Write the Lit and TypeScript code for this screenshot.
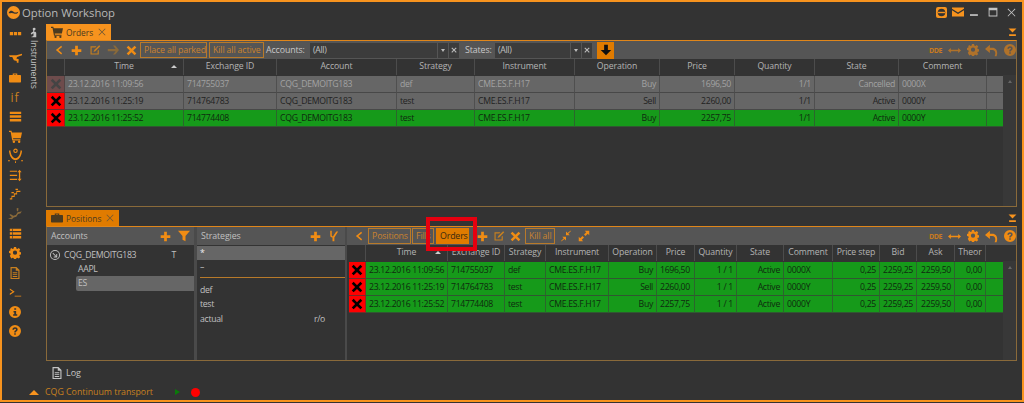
import { LitElement, html, css, svg } from 'lit';
import { customElement } from 'lit/decorators.js';

const ic = (w: number, h: number, body: unknown, cls = '') =>
  html`<svg class="ic ${cls}" width=${w} height=${h} viewBox="0 0 16 16" fill="currentColor">${body}</svg>`;

const plus = (s = 11) => ic(s, s, svg`<path d="M6 1h4v5h5v4h-5v5H6v-5H1V6h5z"/>`);
const cross = (s = 11) => ic(s, s, svg`<path d="M3.500 1 8 5.500 12.500 1 15 3.500 10.500 8 15 12.500 12.500 15 8 10.500 3.500 15 1 12.500 5.500 8 1 3.500z"/>`);
const thinX = (s = 8) => ic(s, s, svg`<path d="M2 1 8 7l6-6 1 1-6 6 6 6-1 1-6-6-6 6-1-1 6-6-6-6z"/>`);
const edit = (s = 12) => ic(s, s, svg`<path d="M2 3h8L8.500 4.500H3.500v8h8V9L13 7.500V14H2z"/><path d="M13.500 1.500 15 3 8.500 9.500 6 10.500 7 8z"/>`);
const chevron = (s = 11) => ic(s, s, svg`<path d="M11.500 1 13 3 7 8l6 5-1.500 2L3 8z"/>`);
const arrowRight = (s = 12) => ic(s, s, svg`<path d="M8 2h3l5 6-5 6H8l3.500-4.500H1v-3h10.500z"/>`);
const help = (s = 12) => ic(s, s, svg`<path fill-rule="evenodd" d="M8 0a8 8 0 1 0 0 16A8 8 0 0 0 8 0zM8 3c2.200 0 3.500 1.200 3.500 3 0 1.500-.9 2.200-1.700 2.800-.5.3-.8.600-.8 1.200H7c0-1.300.6-2 1.400-2.600.6-.4 1-.8 1-1.300 0-.6-.5-1-1.300-1-.9 0-1.400.5-1.500 1.300H4.500C4.600 4.300 6 3 8 3zM7 11h2v2H7z"/>`);
const info = (s = 12) => ic(s, s, svg`<path fill-rule="evenodd" d="M8 0a8 8 0 1 0 0 16A8 8 0 0 0 8 0zM7 3h2.500v2H7zM6 6.500h3.500V11H11v2H5.500v-2H7V8.500H6z"/>`);
const gear = (s = 12) => ic(s, s, svg`<path fill-rule="evenodd" d="M6.500 0h3l.4 2.200 1.500.6L13.300 1.500l2.100 2.100-1.300 1.900.6 1.500 2.300.5v3l-2.300.4-.6 1.500 1.300 1.900-2.100 2.100-1.900-1.300-1.500.6-.4 2.200h-3l-.4-2.200-1.500-.6-1.900 1.300L.6 12.400l1.300-1.900-.6-1.500L-1 8.600v-3l2.300-.5.6-1.500L.6 3.600 2.700 1.500l1.900 1.300 1.500-.6zM8 5a3 3 0 1 0 0 6 3 3 0 0 0 0-6z" transform="translate(.5 0) scale(.94)"/>`);
const undo = (s = 13) => ic(s, s, svg`<path d="M6 1v3.500h3c4 0 6 2.800 6 6.500 0 1.300-.3 2.800-.8 4h-2.400c.6-1.200.9-2.500.9-3.600 0-2.200-1.200-3.900-3.700-3.900H6V11L0 6z"/>`);
const resize = (s = 13) => ic(s, s, svg`<path d="M0 8l3.500-3v2h9V5L16 8l-3.500 3V9h-9v2z"/>`);
const collapseIc = (s = 13) => ic(s, s, svg`<path d="M15 1 11 5l2 2H8V2l2 2 4-3zM1 15l4-4-2-2h5v5l-2-2-4 3z"/>`);
const expandIc = (s = 13) => ic(s, s, svg`<path d="M9 1h6v6l-2-2-3 3-2-2 3-3zM7 15H1V9l2 2 3-3 2 2-3 3z"/>`);
const cart = (s = 14) => ic(s, s, svg`<path d="M0 1h3l.7 2H16l-1.500 7H5l.3 1.500H14V13H4L2 2.500H0z" /><circle cx="6" cy="14.500" r="1.500"/><circle cx="12.500" cy="14.500" r="1.500"/>`);
const briefcase = (s = 14) => ic(s, s, svg`<path d="M5 2h6v2h4a1 1 0 0 1 1 1v8a1 1 0 0 1-1 1H1a1 1 0 0 1-1-1V5a1 1 0 0 1 1-1h4zm1.500 1.200V4h3v-.8z"/>`);
const funnel = (s = 12) => ic(s, s, svg`<path d="M0 1h16L10 8v7l-4-2V8z"/>`);
const fork = (s = 12) => ic(s, s, svg`<path d="M3 1h2v6c0 1 .6 1.500 1.500 1.500L11 2h2.500L8.500 10v5H6v-5C4 10 3 9 3 7z"/>`);
const bars = (s = 14) => ic(s, s, svg`<path d="M1 2h14v3H1zM1 6.500h14v3H1zM1 11h14v3H1z"/>`);
const docIc = (s = 13) => ic(s, s, svg`<path fill-rule="evenodd" d="M2 0h8l4 4v12H2zm1.500 1.500v13h9V5H9V1.500zM5 7h6v1.200H5zm0 2.500h6v1.200H5zm0 2.500h6v1.200H5z"/>`);
const menuIc = () => ic(9, 9, svg`<path d="M1 1h14L8 8zM2 11h12v3H2z"/>`);

const sideIcons = [
  ic(13, 13, svg`<path d="M1 6h4v4H1zM6 6h4v4H6zM11 6h4v4h-4z"/>`),
  ic(13, 13, svg`<path d="M0 4h9l7-2v2l-6 2-1 2 3 1-.5 4.500-2-.5V11L6 10 4 6H1z"/>`),
  briefcase(12),
  html`<span class="if">if</span>`,
  bars(13),
  cart(13),
  ic(15, 15, svg`<path d="M1 3l1.500-.5C3 7 5 11 8 11s5-4 5.500-8.500L15 3c-.5 6-3.500 10-7 10S1.500 9 1 3z"/><circle cx="8" cy="3" r="1.800" fill="none" stroke="currentColor" stroke-width="1.200"/><path d="M0 13h2v1H0zM14 13h2v1h-2zM7.500 14h1v2h-1z"/>`),
  ic(13, 13, svg`<path d="M1 2h9v1.500H1zM1 7h9v1.500H1zM1 12h9v1.500H1zM13 1l2.500 3h-1.700v8h1.700L13 15l-2.500-3h1.700V4h-1.700z"/>`),
  ic(13, 13, svg`<path d="M1 14h3v-3h3V8h3V5h4V3.500h-5v3H6v3H3v3H1zM8 1h3v1.500H8zM3 5h3v1.500H3z"/>`),
  ic(14, 14, svg`<path d="M0 13l4-1 2-2 3-1 2-3 4-1 1-1-1.500 3-3 1-2 3-3 1-2 2zM2 8l3 1 1.500 2.500-1.500.5-3-2.500zM10 1l2 .5-.5 4-1.500-1.500z"/>`, 'dim'),
  ic(13, 13, svg`<path d="M1 2h14v3H1zM1 6.500h14v3H1zM1 11h14v3H1z"/><path fill="#333" d="M4 2h.8v12H4z"/>`),
  gear(12),
  ic(12, 12, svg`<path fill-rule="evenodd" d="M2 0h8l4 4v12H2zm1.500 1.500v13h9V5H9V1.500zM5 7h6v1.200H5zm0 2.500h6v1.200H5zm0 2.500h6v1.200H5z"/>`, 'soft'),
  ic(13, 13, svg`<path d="M1 3 7 7 1 11V9.300L4.500 7 1 4.700zM7 12h8v1H7z"/>`),
  info(12),
  help(12),
];

const ordersTop = [
  ['dim', '23.12.2016 11:09:56', '714755037', 'CQG_DEMOITG183', 'def', 'CME.ES.F.H17', 'Buy', '1696,50', '1/1', 'Cancelled', '0000X'],
  ['gray', '23.12.2016 11:25:19', '714764783', 'CQG_DEMOITG183', 'test', 'CME.ES.F.H17', 'Sell', '2260,00', '1/1', 'Active', '0000Y'],
  ['green', '23.12.2016 11:25:52', '714774408', 'CQG_DEMOITG183', 'test', 'CME.ES.F.H17', 'Buy', '2257,75', '1/1', 'Active', '0000Y'],
];
const topAlign = ['l', 'l', 'l', 'l', 'l', 'r', 'r', 'r', 'r', 'l'];
const topHead = ['Time', 'Exchange ID', 'Account', 'Strategy', 'Instrument', 'Operation', 'Price', 'Quantity', 'State', 'Comment'];

const ordersPos = [
  ['23.12.2016 11:09:56', '714755037', 'def', 'CME.ES.F.H17', 'Buy', '1696,50', '1 / 1', 'Active', '0000X', '0,25', '2259,25', '2259,50', '0,00'],
  ['23.12.2016 11:25:19', '714764783', 'test', 'CME.ES.F.H17', 'Sell', '2260,00', '1 / 1', 'Active', '0000Y', '0,25', '2259,25', '2259,50', '0,00'],
  ['23.12.2016 11:25:52', '714774408', 'test', 'CME.ES.F.H17', 'Buy', '2257,75', '1 / 1', 'Active', '0000Y', '0,25', '2259,25', '2259,50', '0,00'],
];
const posAlign = ['l', 'l', 'l', 'l', 'r', 'l', 'r', 'r', 'l', 'r', 'r', 'r', 'r'];
const posHead = ['Time', 'Exchange ID', 'Strategy', 'Instrument', 'Operation', 'Price', 'Quantity', 'State', 'Comment', 'Price step', 'Bid', 'Ask', 'Theor'];

@customElement('app-root')
export class AppRoot extends LitElement {
  static styles = css`
    :host {
      display: block;
      position: relative;
      width: 1024px;
      height: 403px;
      overflow: hidden;
      background: #333;
      color: #c4c4c4;
      font-family: 'Open Sans', 'Noto Sans', sans-serif;
      font-size: 8.700px;
      letter-spacing: -0.3px;
    }
    .window {
      box-sizing: border-box;
      height: 402px;
      border: 2px solid #f7931e;
      display: flex;
      flex-direction: column;
    }
    .ic { display: block; flex: none; }
    .titlebar {
      height: 22px;
      display: flex;
      align-items: center;
      padding: 0 5px 2px;
      box-sizing: border-box;
      flex: none;
    }
    .logo { color: #f7931e; margin-right: 2px; }
    .title { font-size: 11.300px; color: #b8b8b8; letter-spacing: 0; }
    .win-btns { margin-left: auto; display: flex; align-items: center; color: #c4c4c4; }
    .win-btns .o { color: #f7931e; }
    .win-btns > * { margin-left: 5px; }
    .body { flex: 1; display: flex; min-height: 0; }
    .sidebar {
      width: 26px;
      flex: none;
      display: flex;
      flex-direction: column;
      align-items: center;
      color: #f08c14;
    }
    .sidebar .slot { height: 19.500px; display: flex; align-items: center; justify-content: center; flex: none; }
    .sidebar .slot:first-child { margin-bottom: 5px; }
    .sidebar .dim { color: #8a6a3a; }
    .sidebar .soft { color: #c8801f; }
    .if { font-size: 12px; color: #c8801f; letter-spacing: 1px; }
    .strip {
      box-sizing: border-box;
      width: 18px;
      flex: none;
      display: flex;
      flex-direction: column;
      align-items: center;
      padding: 3px 7px 0 0;
      color: #c4c4c4;
    }
    .strip span { writing-mode: vertical-rl; margin-top: 2px; font-size: 8.600px; letter-spacing: 0; }
    .main { width: 971px; flex: none; display: flex; flex-direction: column; }
    .tabs { height: 16px; display: flex; align-items: stretch; flex: none; }
    .tabs.second { margin-top: 3px; }
    .tab {
      display: flex;
      align-items: center;
      gap: 3px;
      padding: 0 5px;
      background: #f7931e;
      color: #4a3a20;
      font-size: 8.400px;
      letter-spacing: 0;
    }
    .tab.dark { background: #e07b00; }
    .tab .x { color: #6b5636; margin-left: 2px; }
    .tab-menu { margin-left: auto; margin-right: 0; align-self: center; color: #f7931e; }
    .panel {
      box-sizing: border-box;
      border: 1px solid #8a6a3a;
      border-top-color: #e0861a;
      display: flex;
      flex-direction: column;
      flex: none;
    }
    .panel.one { height: 167px; }
    .panel.two { height: 135px; flex-direction: row; }
    .toolbar {
      height: 18px;
      flex: none;
      background: #555;
      display: flex;
      align-items: center;
      color: #f08c14;
    }
    .toolbar > .ic { margin-left: 7px; }
    .toolbar .soft { color: #c8801f; }
    .toolbar .dimmed { color: #8a6a3a; }
    .tbtn {
      box-sizing: border-box;
      height: 16px;
      display: flex;
      align-items: center;
      padding: 0 3px;
      border: 1px solid #b87a2a;
      color: #c9822e;
      white-space: nowrap;
      font-size: 8.800px;
      letter-spacing: -0.15px;
    }
    .tbtn.on { background: #e07b00; color: #3a2a10; border-color: #e07b00; }
    .lbl { color: #c8c8c8; font-size: 8.800px; letter-spacing: -0.1px; }
    .combo { height: 15px; background: #3c3c3c; color: #c0c0c0; display: flex; align-items: center; padding-left: 3px; box-sizing: border-box; }
    .cbtn { width: 10px; height: 15px; background: #3c3c3c; margin-left: 1px; display: flex; align-items: center; justify-content: center; color: #bbb; flex: none; }
    .tri { width: 0; height: 0; border: 2.500px solid transparent; border-top: 3px solid currentColor; border-bottom: 0; }
    .go { width: 17px; height: 17px; background: #e07b00; color: #111; display: flex; align-items: center; justify-content: center; margin-left: 5px; }
    .right { margin-left: auto; display: flex; align-items: center; gap: 6px; color: #b0722a; }
    .right.bright { color: #f08c14; }
    .dde { font-size: 7px; font-weight: 700; color: #c87a1e; letter-spacing: -0.4px; margin-right: 0; }
    .table { flex: 1; min-height: 0; display: flex; flex-direction: column; }
    .table.pos { margin-left: 2px; }
    .grid { display: grid; }
    .g-top { grid-template-columns: 18px 119px 93px 120px 78px 100px 85px 75px 80px 84px 88px 17px; }
    .g-pos { grid-template-columns: 17px 82px 57px 41px 63px 48px 38px 42px 47px 49px 47px 37px 38px 31px 18px; }
    .hcell {
      height: 16px;
      line-height: 15px;
      text-align: center;
      color: #b4b4b4;
      background: #333;
      border-right: 1px solid #4c4c4c;
      box-sizing: border-box;
      white-space: nowrap;
      overflow: hidden;
      position: relative;
      letter-spacing: -0.1px;
    }
    .hcell:last-child { border-right: 0; }
    .sort {
      position: absolute;
      right: 6px;
      top: 6px;
      width: 0;
      height: 0;
      border: 3px solid transparent;
      border-bottom: 3px solid #ccc;
      border-top: 0;
    }
    .rows { flex: 1; min-height: 0; display: flex; }
    .rowlist { flex: 1; min-width: 0; padding-top: 1px; }
    .cell {
      box-sizing: border-box;
      height: 17px;
      line-height: 17px;
      padding: 0 3px;
      white-space: nowrap;
      overflow: hidden;
      border-right: 1px solid rgba(60, 60, 60, 0.55);
      border-bottom: 1px solid rgba(60, 60, 60, 0.7);
    }
    .cell.r { text-align: right; }
    .dim .cell { background: #666; color: #a2a2a2; }
    .gray .cell { background: #666; color: #222; }
    .green .cell { background: #169a1a; color: #0f2a0f; }
    .cell.kill {
      padding: 0;
      display: flex;
      align-items: center;
      justify-content: center;
    }
    .dim .cell.kill { background: #6e4c4c; color: #444; }
    .green .cell.kill, .gray .cell.kill { background: #f00; color: #000; }
    .scroll { width: 13px; flex: none; margin-left: -1px; background: #383838; display: flex; justify-content: center; padding-top: 5px; box-sizing: border-box; }
    .scroll i { width: 0; height: 0; border: 2.500px solid transparent; border-bottom: 3px solid #666; border-top: 0; }
    .col { display: flex; flex-direction: column; flex: none; }
    .col.acc { width: 147px; }
    .col.str { width: 148px; }
    .col.ord { flex: 1; min-width: 0; }
    .split { width: 3px; flex: none; background: #4a4a4a; }
    .split.n { width: 2px; }
    .hd { height: 18px; background: #555; display: flex; align-items: center; padding: 0 4px; color: #f08c14; flex: none; }
    .hd .lbl { flex: 1; color: #c0c0c0; }
    .hd .ic { margin-left: 7px; }
    .acct { display: flex; align-items: center; height: 16px; padding-left: 3px; margin-top: 2px; color: #c0c0c0; }
    .acct .t { margin-left: auto; margin-right: 18px; }
    .acct svg { margin-right: 4px; color: #c0c0c0; }
    .sub { padding-left: 31px; height: 13px; line-height: 13px; color: #c0c0c0; }
    .sub.sel { height: 15px; line-height: 15px; margin-left: 29px; padding-left: 2px; background: #666; border-radius: 2px 0 0 2px; }
    .st { height: 14.500px; line-height: 14.500px; padding-left: 3px; display: flex; color: #c0c0c0; }
    .st.sel { height: 14px; margin-top: 1px; background: #666; color: #eee; }
    .st span:last-child:not(:first-child) { margin-left: auto; margin-right: 20px; }
    .hr { height: 1px; background: #b87a2a; margin: 2px 0 5px 3px; }
    .log { height: 23px; flex: none; display: flex; align-items: center; gap: 3px; padding-left: 5px; color: #c4c4c4; font-size: 9px; letter-spacing: 0; }
    .status { height: 16px; flex: none; display: flex; align-items: center; padding-left: 27px; color: #c8801f; font-size: 8.800px; letter-spacing: 0; }
    .up { width: 0; height: 0; border: 5.500px solid transparent; border-bottom: 5px solid #f7931e; border-top: 0; margin-right: 6px; }
    .play { width: 0; height: 0; border: 3.500px solid transparent; border-left: 5px solid #0a7a0a; border-right: 0; margin-left: 22px; }
    .rec { width: 9px; height: 9px; border-radius: 50%; background: #f00; margin-left: 11px; }
    .callout {
      position: absolute;
      left: 426px;
      top: 217px;
      width: 51px;
      height: 34px;
      box-sizing: border-box;
      border: 4px solid #e6000f;
      pointer-events: none;
    }
  `;

  rightTools(bright: boolean) {
    return html`<div class="right ${bright ? 'bright' : ''}">
      <span class="dde">DDE</span>${resize(13)}${gear(12)}${undo(13)}${help(12)}
    </div>`;
  }

  render() {
    return html`
      <div class="window">
        <div class="titlebar">
          <span class="logo">${ic(13, 13, svg`<path fill-rule="evenodd" d="M8 0a8 8 0 1 0 0 16A8 8 0 0 0 8 0zM2 8.500c1-2.500 3-3 4.500-2.500s2.500 2 4 2 2-1 3.500-1c-1 2.500-3 3-4.500 2.500S7 8.500 5.500 8.500 3 9.500 2 8.500z"/>`)}</span>
          <span class="title">Option Workshop</span>
          <div class="win-btns">
            <span class="o">${ic(11, 11, svg`<rect x="0" y="0" width="16" height="16" rx="3"/><circle cx="8" cy="8" r="5.500" fill="#333"/><path d="M3 7h10v2H3z" fill="#f7931e"/>`)}</span>
            <span class="o">${ic(12, 12, svg`<path d="M0 2h16v1.500L8 8.500 0 3.500zM0 5.500l8 5 8-5V14H0z"/>`)}</span>
            <span style="margin-left:6px">${ic(9, 9, svg`<path d="M0 11h14v3H0z"/>`)}</span>
            <span style="margin-left:9px">${ic(10, 10, svg`<path fill-rule="evenodd" d="M1 1h14v14H1zm1.500 4v8.500h11V5z"/>`)}</span>
            <span style="margin-left:9px;margin-right:1px">${thinX(9)}</span>
          </div>
        </div>
        <div class="body">
          <div class="sidebar">
            ${sideIcons.map((i) => html`<div class="slot">${i}</div>`)}
          </div>
          <div class="strip">
            ${ic(11, 11, svg`<path d="M9 1a2 2 0 1 1 0 4V7h1c1 0 2 1 2 2v6H5v-1c2 0 3-1 3-2V9c-1 .5-2 1-2.500 2L4 10c.5-1.500 2-2.700 3.500-3V4.500A2 2 0 0 1 9 1z"/>`)}
            <span>Instruments</span>
          </div>
          <div class="main">
            <div class="tabs">
              <div class="tab">${cart(12)}<span>Orders</span><span class="x">${thinX(8)}</span></div>
              <span class="tab-menu">${menuIc()}</span>
            </div>
            <div class="panel one">
              <div class="toolbar">
                <span style="width:0"></span>${chevron(10)}${plus(11)}
                <span class="soft" style="margin-left:7px">${edit(12)}</span>
                <span class="dimmed" style="margin-left:6px">${arrowRight(12)}</span>${cross(11)}
                <div class="tbtn" style="margin-left:3px;width:67px">Place all parked</div>
                <div class="tbtn" style="margin-left:2px;width:55px">Kill all active</div>
                <span class="lbl" style="margin-left:2px;width:44px">Accounts:</span>
                <div class="combo" style="width:127px">(All)</div>
                <div class="cbtn"><i class="tri"></i></div>
                <div class="cbtn">${ic(6, 6, svg`<path d="M3 1 8 6l5-5 2 2-5 5 5 5-2 2-5-5-5 5-2-2 5-5-5-5z"/>`)}</div>
                <span class="lbl" style="margin-left:6px;width:30px">States:</span>
                <div class="combo" style="width:75px">(All)</div>
                <div class="cbtn"><i class="tri"></i></div>
                <div class="cbtn">${ic(6, 6, svg`<path d="M3 1 8 6l5-5 2 2-5 5 5 5-2 2-5-5-5 5-2-2 5-5-5-5z"/>`)}</div>
                <div class="go">${ic(12, 12, svg`<path d="M5.500 1h5v7H15l-7 7-7-7h4.500z"/>`)}</div>
                ${this.rightTools(false)}
              </div>
              <div class="table">
                <div class="grid g-top">
                  <div class="hcell"></div>
                  ${topHead.map((h, i) => html`<div class="hcell">${h}${i === 0 ? html`<i class="sort"></i>` : ''}</div>`)}
                  <div class="hcell"></div>
                </div>
                <div class="rows">
                  <div class="rowlist">
                    ${ordersTop.map(
                      (r) => html`<div class="grid g-top ${r[0]}">
                        <div class="cell kill">${cross(12)}</div>
                        ${r.slice(1).map((c, i) => html`<div class="cell ${topAlign[i]}">${c}</div>`)}
                        <div class="cell"></div>
                      </div>`,
                    )}
                  </div>
                  <div class="scroll"><i></i></div>
                </div>
              </div>
            </div>
            <div class="tabs second">
              <div class="tab dark">${briefcase(12)}<span>Positions</span><span class="x">${thinX(8)}</span></div>
              <span class="tab-menu">${menuIc()}</span>
            </div>
            <div class="panel two">
              <div class="col acc">
                <div class="hd"><span class="lbl">Accounts</span>${plus(11)}${funnel(12)}</div>
                <div class="acct">
                  ${ic(10, 10, svg`<path fill-rule="evenodd" d="M8 0a8 8 0 1 0 0 16A8 8 0 0 0 8 0zm0 1.500a6.500 6.500 0 1 1 0 13 6.500 6.500 0 0 1 0-13zM5 4.500 10 9.500V6.500h1.500V12H6v-1.500h3L4 5.500z"/>`)}
                  <span>CQG_DEMOITG183</span><span class="t">T</span>
                </div>
                <div class="sub">AAPL</div>
                <div class="sub sel">ES</div>
              </div>
              <div class="split"></div>
              <div class="col str">
                <div class="hd"><span class="lbl">Strategies</span>${plus(11)}<span style="margin-right:1px">${fork(12)}</span></div>
                <div class="st sel"><span>*</span></div>
                <div class="st"><span>–</span></div>
                <div class="hr"></div>
                <div class="st"><span>def</span></div>
                <div class="st"><span>test</span></div>
                <div class="st"><span>actual</span><span>r/o</span></div>
              </div>
              <div class="split n"></div>
              <div class="col ord">
                <div class="toolbar">
                  <span style="width:0"></span>${chevron(10)}
                  <div class="tbtn" style="margin-left:4px;width:43px">Positions</div>
                  <div class="tbtn" style="margin-left:1px;width:22px">Fills</div>
                  <div class="tbtn on" style="margin-left:2px;width:33px">Orders</div>
                  <span style="margin-left:8px">${plus(11)}</span>
                  <span class="soft" style="margin-left:5px">${edit(12)}</span>
                  <span style="margin-left:5px">${cross(11)}</span>
                  <div class="tbtn" style="margin-left:4px;width:30px">Kill all</div>
                  <span style="margin-left:5px">${collapseIc(12)}</span>
                  <span style="margin-left:6px">${expandIc(12)}</span>
                  ${this.rightTools(true)}
                </div>
                <div class="table pos">
                  <div class="grid g-pos">
                    <div class="hcell"></div>
                    ${posHead.map((h, i) => html`<div class="hcell">${h}${i === 0 ? html`<i class="sort"></i>` : ''}</div>`)}
                    <div class="hcell"></div>
                  </div>
                  <div class="rows">
                    <div class="rowlist">
                      ${ordersPos.map(
                        (r) => html`<div class="grid g-pos green">
                          <div class="cell kill">${cross(12)}</div>
                          ${r.map((c, i) => html`<div class="cell ${posAlign[i]}">${c}</div>`)}
                          <div class="cell"></div>
                        </div>`,
                      )}
                    </div>
                    <div class="scroll"><i></i></div>
                  </div>
                </div>
              </div>
            </div>
            <div class="log">${docIc(12)}<span>Log</span></div>
          </div>
        </div>
        <div class="status">
          <i class="up"></i><span>CQG Continuum transport</span><i class="play"></i><i class="rec"></i>
        </div>
      </div>
      <div class="callout"></div>
    `;
  }
}

declare global {
  interface HTMLElementTagNameMap {
    'app-root': AppRoot;
  }
}
